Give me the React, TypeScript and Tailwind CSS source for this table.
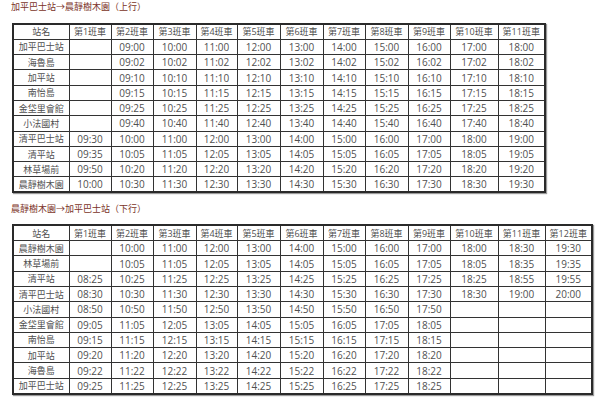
import React from 'react';

// Bus timetable: Gapyeong bus terminal <-> Garden of Morning Calm
const upStops = ['加平巴士站', '海魯島', '加平站', '南怡島', '金垈里會館', '小法國村', '清平巴士站', '清平站', '林草場前', '晨靜樹木園'];

const addMin = (t: string, m: number) => {
  const [h, mm] = t.split(':').map(Number);
  const total = h * 60 + mm + m;
  const hh = Math.floor(total / 60);
  const rm = total % 60;
  return `${String(hh).padStart(2, '0')}:${String(rm).padStart(2, '0')}`;
};

// up direction
const upOffsets = [0, 2, 10, 15, 25, 40];
const upRows: string[][] = [
  ...upOffsets.map((o) => ['', ...Array.from({ length: 10 }, (_, i) => addMin(`${String(9 + i).padStart(2, '0')}:00`, o))]),
  ['09:30', ...Array.from({ length: 10 }, (_, i) => `${10 + i}:00`)],
  ['09:35', ...Array.from({ length: 10 }, (_, i) => `${10 + i}:05`)],
  ['09:50', ...Array.from({ length: 10 }, (_, i) => `${10 + i}:20`)],
  ['10:00', ...Array.from({ length: 10 }, (_, i) => `${10 + i}:30`)],
];

// down direction
const downStops = ['晨靜樹木園', '林草場前', '清平站', '清平巴士站', '小法國村', '金垈里會館', '南怡島', '加平站', '海魯島', '加平巴士站'];
const hours = (mm: string) => Array.from({ length: 9 }, (_, i) => `${10 + i}:${mm}`);
const downRows: string[][] = [
  ['', ...hours('00'), '18:30', '19:30'],
  ['', ...hours('05'), '18:35', '19:35'],
  ['08:25', ...hours('25'), '18:55', '19:55'],
  ['08:30', ...hours('30'), '19:00', '20:00'],
  ['08:50', ...Array.from({ length: 8 }, (_, i) => `${10 + i}:50`), '', '', ''],
  ['09:05', ...Array.from({ length: 8 }, (_, i) => `${11 + i}:05`), '', '', ''],
  ['09:15', ...Array.from({ length: 8 }, (_, i) => `${11 + i}:15`), '', '', ''],
  ['09:20', ...Array.from({ length: 8 }, (_, i) => `${11 + i}:20`), '', '', ''],
  ['09:22', ...Array.from({ length: 8 }, (_, i) => `${11 + i}:22`), '', '', ''],
  ['09:25', ...Array.from({ length: 8 }, (_, i) => `${11 + i}:25`), '', '', ''],
];

const colWidths = ['w-[56px]', 'w-[42px]', 'w-[42px]', 'w-[43px]', 'w-[41px]', 'w-[43px]', 'w-[43px]', 'w-[42px]', 'w-[43px]', 'w-[42px]', 'w-[48px]', 'w-[47px]', 'w-[47px]'];

const cell = 'h-[15.3px] p-0 border border-[#333] text-center align-middle leading-none whitespace-nowrap';

function Timetable({ stops, rows, buses, width }: { stops: string[]; rows: string[][]; buses: number; width: string }) {
  return (
    <table className={`${width} table-fixed border-collapse border-2 border-[#2a2a2a] shadow-[1px_1px_1px_#9a9a9a] text-[#505050] text-[10px]`}>
      <colgroup>
        {colWidths.slice(0, buses + 1).map((w, i) => (
          <col key={i} className={w} />
        ))}
      </colgroup>
      <tbody>
        <tr>
          <td className={`${cell} text-[9px]`}>站名</td>
          {Array.from({ length: buses }, (_, i) => (
            <td key={i} className={`${cell} text-[9px]`}>
              第{i + 1}班車
            </td>
          ))}
        </tr>
        {stops.map((s, r) => (
          <tr key={s}>
            <td className={`${cell} text-[9px]`}>{s}</td>
            {rows[r].map((t, c) => (
              <td key={c} className={cell}>
                {t}
              </td>
            ))}
          </tr>
        ))}
      </tbody>
    </table>
  );
}

export default function App() {
  return (
    <div className="w-[600px] h-[409px] bg-white overflow-hidden" style={{ fontFamily: '"Open Sans", "Noto Sans CJK TC", sans-serif' }}>
      <div className="pl-[11px] pt-[1px] h-[23px] text-[9px] leading-[12px] text-[#7b3327]">加平巴士站→晨靜樹木園（上行）</div>
      <div className="pl-[12px]">
        <Timetable stops={upStops} rows={upRows} buses={11} width="w-[532px]" />
      </div>
      <div className="pl-[11px] pt-[10px] h-[31px] text-[9px] leading-[12px] text-[#7b3327]">晨靜樹木園→加平巴士站（下行）</div>
      <div className="pl-[12px]">
        <Timetable stops={downStops} rows={downRows} buses={12} width="w-[579px]" />
      </div>
    </div>
  );
}
